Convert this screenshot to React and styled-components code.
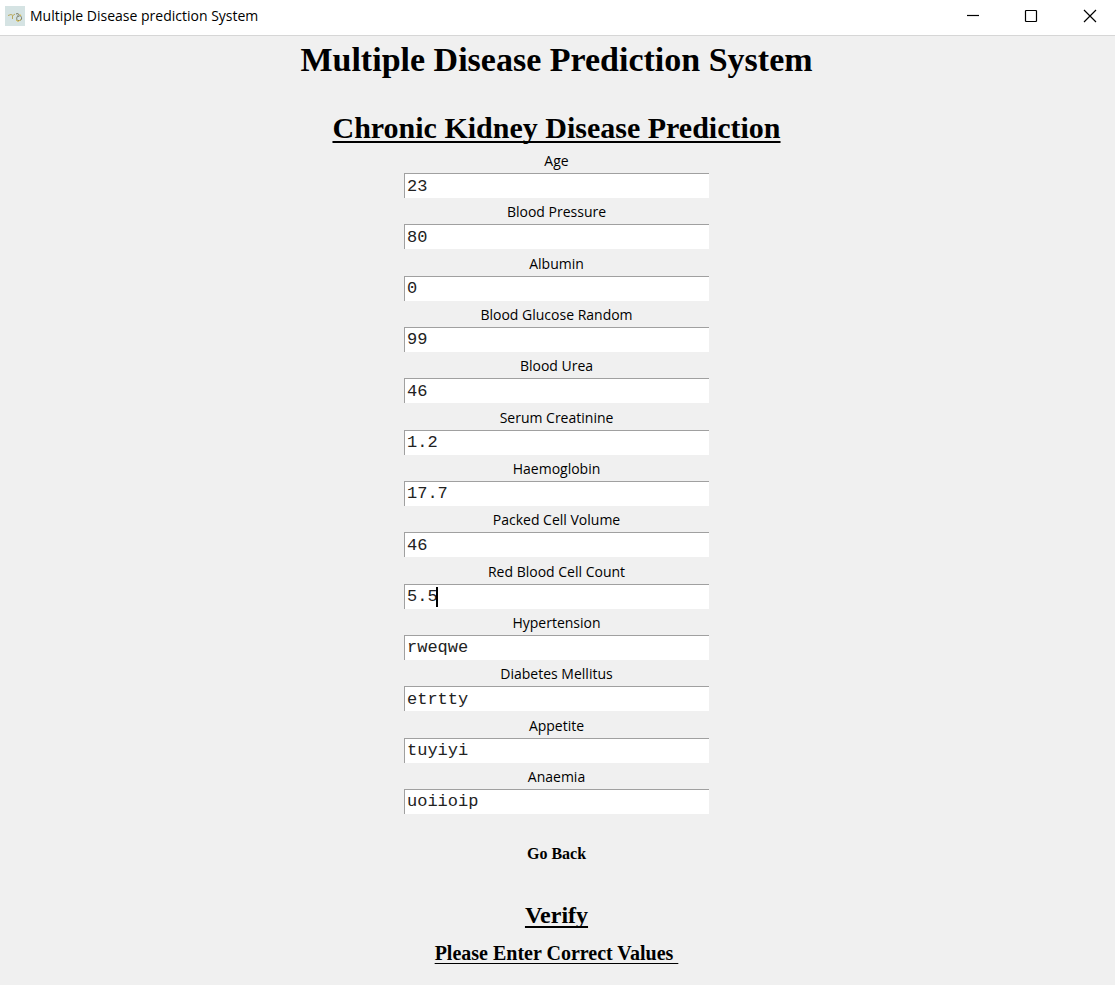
import React, { useState } from "react";
import styled, { createGlobalStyle } from "styled-components";

const GlobalStyle = createGlobalStyle`
  * { box-sizing: border-box; }
  body { margin: 0; background: #f0f0f0; color: #000; }
`;

const serif = `"Liberation Serif", "Times New Roman", serif`;
const sans = `"Open Sans", "Noto Sans", sans-serif`;
const mono = `"Liberation Mono", "Courier New", monospace`;

const Window = styled.div`
  min-height: 100vh;
  display: flex;
  flex-direction: column;
`;

const TitleBar = styled.header`
  height: 36px;
  flex: none;
  display: flex;
  align-items: center;
  padding: 0 1px 4px 5px;
  background: #fff;
  border-bottom: 1px solid #d6d6d6;
`;

const WindowTitle = styled.span`
  flex: 1;
  padding-left: 5px;
  font: 14px/20px ${sans};
`;

const WindowButton = styled.button`
  width: 58px;
  height: 30px;
  display: flex;
  align-items: center;
  justify-content: center;
  padding: 0;
  border: 0;
  background: none;
  &:last-child { width: 48px; margin-left: 6px; }
`;

const Content = styled.main`
  flex: 1;
  display: flex;
  flex-direction: column;
  align-items: center;
  padding: 0 2px 19px 0;
`;

const Title = styled.h1`
  margin: 0;
  font: bold 34px/48px ${serif};
`;

const Subtitle = styled.h2`
  margin: 23px 0 0;
  font: bold 30px/41px ${serif};
  text-decoration: underline 2px;
  text-underline-offset: 3px;
  text-decoration-skip-ink: none;
`;

const Form = styled.form`
  flex: 1;
  width: 100%;
  display: flex;
  flex-direction: column;
  align-items: center;
`;

const Fields = styled.div`
  flex: 1;
  width: 305px;
  max-width: 100%;
  display: flex;
  flex-direction: column;
  justify-content: space-between;
`;

const Field = styled.div`
  display: flex;
  flex-direction: column;
`;

const Label = styled.label`
  font: 14px/25px ${sans};
  text-align: center;
`;

const InputWrap = styled.div`
  position: relative;
  font: 17px/24px ${mono};
`;

const Input = styled.input`
  display: block;
  width: 100%;
  height: 25px;
  padding: 0 2px;
  border: 0 solid #a0a0a0;
  border-width: 1px 0 0 1px;
  border-radius: 0;
  background: #fff;
  color: #222;
  font: inherit;
  outline: none;
`;

const Caret = styled.span`
  position: absolute;
  top: 3px;
  left: calc(1px + ${(p) => p.$column}ch);
  width: 2px;
  height: 20px;
  background: #000;
`;

const TextButton = styled.button`
  padding: 0;
  border: 0;
  background: none;
  color: #000;
  font-family: ${serif};
  font-weight: bold;
`;

const BackButton = styled(TextButton)`
  margin-top: 28px;
  font-size: 16px;
  line-height: 24px;
`;

const VerifyButton = styled(TextButton)`
  margin-top: 32px;
  font-size: 24px;
  line-height: 34px;
  text-decoration: underline 2px;
  text-underline-offset: 3px;
  text-decoration-skip-ink: none;
`;

const Message = styled.p`
  margin: 8px 0 0;
  font: bold 20px/26px ${serif};
  white-space: pre;
  text-decoration: underline 1px;
  text-underline-offset: 3px;
  text-decoration-skip-ink: none;
`;

const FIELDS = [
  ["age", "Age", "23"],
  ["bp", "Blood Pressure", "80"],
  ["albumin", "Albumin", "0"],
  ["glucose", "Blood Glucose Random", "99"],
  ["urea", "Blood Urea", "46"],
  ["creatinine", "Serum Creatinine", "1.2"],
  ["haemoglobin", "Haemoglobin", "17.7"],
  ["pcv", "Packed Cell Volume", "46"],
  ["rbc", "Red Blood Cell Count", "5.5"],
  ["hypertension", "Hypertension", "rweqwe"],
  ["diabetes", "Diabetes Mellitus", "etrtty"],
  ["appetite", "Appetite", "tuyiyi"],
  ["anaemia", "Anaemia", "uoiioip"],
];

function AppIcon() {
  return (
    <svg width="20" height="20" viewBox="0 0 20 20" fill="none" aria-hidden="true">
      <rect width="20" height="20" fill="#d5e3e3" />
      <path d="M3 9.5l3-1 2 1 2-1.5M7.5 10v3" stroke="#b9a85c" />
      <path d="M11 8c2-1 3-.5 2 1.500-1.500 2-2 4.500 0 5 2.500.5 4-1 3.500-3s-2-2.500-3.500-.5" stroke="#777963" />
      <path d="M11 14l2 1.500 3-2M14.500 8l1.500 2" stroke="#d9bd50" />
    </svg>
  );
}

function ControlIcon({ d }) {
  return (
    <svg width="14" height="14" viewBox="0 0 14 14" fill="none" stroke="#000" strokeWidth="1.2" aria-hidden="true">
      <path d={d} />
    </svg>
  );
}

export default function App() {
  const [values, setValues] = useState(() =>
    Object.fromEntries(FIELDS.map(([id, , value]) => [id, value]))
  );
  const [active, setActive] = useState("rbc");

  return (
    <Window>
      <GlobalStyle />
      <TitleBar>
        <AppIcon />
        <WindowTitle>Multiple Disease prediction System</WindowTitle>
        <WindowButton type="button" aria-label="Minimize">
          <ControlIcon d="M1 6.500H13" />
        </WindowButton>
        <WindowButton type="button" aria-label="Maximize">
          <ControlIcon d="M2 1.500H12L12.500 2V12L12 12.500H2L1.500 12V2Z" />
        </WindowButton>
        <WindowButton type="button" aria-label="Close">
          <ControlIcon d="M1 1L13 13M13 1L1 13" />
        </WindowButton>
      </TitleBar>
      <Content>
        <Title>Multiple Disease Prediction System</Title>
        <Subtitle>Chronic Kidney Disease Prediction</Subtitle>
        <Form onSubmit={(e) => e.preventDefault()}>
          <Fields>
            {FIELDS.map(([id, label]) => (
              <Field key={id}>
                <Label htmlFor={id}>{label}</Label>
                <InputWrap>
                  <Input
                    id={id}
                    type="text"
                    value={values[id]}
                    spellCheck={false}
                    onFocus={() => setActive(null)}
                    onChange={(e) => setValues({ ...values, [id]: e.target.value })}
                  />
                  {active === id && <Caret $column={values[id].length} />}
                </InputWrap>
              </Field>
            ))}
          </Fields>
          <BackButton type="button">Go Back</BackButton>
          <VerifyButton type="submit">Verify</VerifyButton>
          <Message role="alert">{"Please Enter Correct Values "}</Message>
        </Form>
      </Content>
    </Window>
  );
}
